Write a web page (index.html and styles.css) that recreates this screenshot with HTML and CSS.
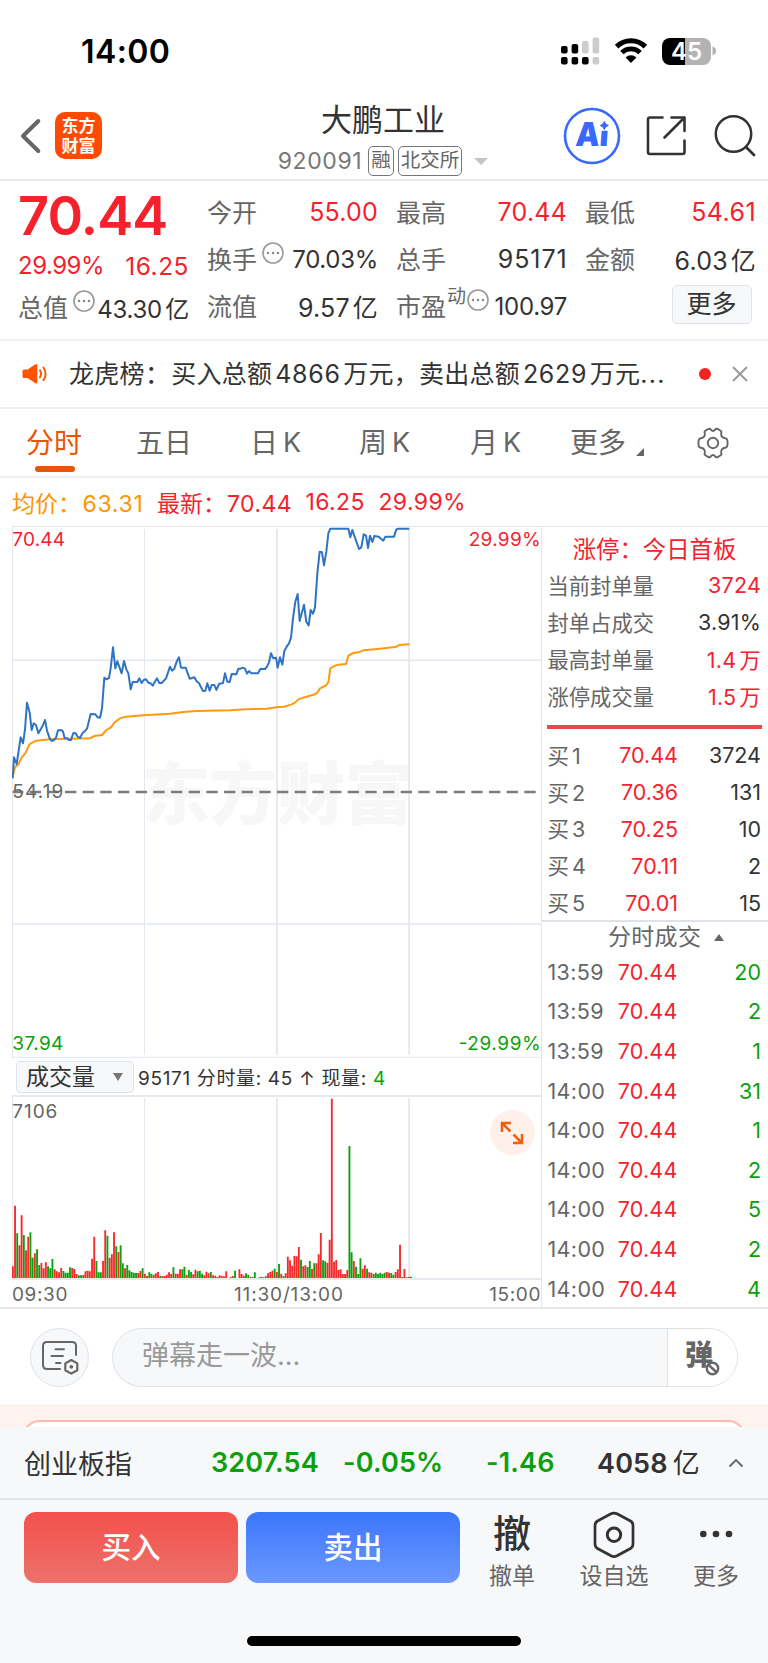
FILE: index.html
```html
<!DOCTYPE html>
<html lang="zh-CN">
<head>
<meta charset="utf-8">
<title>大鹏工业 920091</title>
<link rel="stylesheet" href="styles.css">
</head>
<body>
<div class="app">
  <div class="status">
    <span class="clock">14:00</span>
    <div class="status-icons">
      <svg class="signal" width="39" height="28" viewBox="0 0 39 28">
        <g fill="#000"><rect x="0" y="9" width="6.6" height="7.6" rx="2"/><rect x="10.6" y="7" width="6.6" height="9.6" rx="2"/><rect x="0" y="20" width="6.6" height="7.6" rx="2"/><rect x="10.6" y="20" width="6.6" height="7.6" rx="2"/><rect x="21" y="20" width="6.6" height="7.6" rx="2"/></g>
        <g fill="#ccc"><rect x="21" y="4" width="6.6" height="12.6" rx="2"/><rect x="31.6" y="0.5" width="6.6" height="16.1" rx="2"/><rect x="31.6" y="20" width="6.6" height="7.6" rx="2"/></g>
      </svg>
      <svg class="wifi" width="34" height="26" viewBox="0 0 34 26">
        <path d="M2.600 8.600a20.500 20.500 0 0 1 28.800 0" fill="none" stroke="#000" stroke-width="5"/>
        <path d="M7.900 14.600a13 13 0 0 1 18.200 0" fill="none" stroke="#000" stroke-width="4.800"/>
        <path d="M11.600 19.400a7.600 7.600 0 0 1 10.800 0L17 25z"/>
      </svg>
      <div class="battery"><span>45</span></div>
      <svg width="4" height="10" viewBox="0 0 4 10"><path d="M0.500 0.500a4.600 4.600 0 0 1 0 9z" fill="#b3b3b3"/></svg>
    </div>
  </div>

  <header class="header">
    <div class="header-left">
      <svg width="22" height="36" viewBox="0 0 22 36"><path d="M18.300 3L3 18l15.300 15" fill="none" stroke="#666" stroke-width="4" stroke-linecap="round" stroke-linejoin="round"/></svg>
      <div class="logo">东方<br>财富</div>
    </div>
    <div class="header-mid">
      <h1>大鹏工业</h1>
      <div class="code-line"><span class="code">920091</span><span class="tag">融</span><span class="tag">北交所</span><i class="caret-down"></i></div>
    </div>
    <div class="header-right">
      <svg width="58" height="58" viewBox="0 0 58 58">
        <circle cx="29" cy="29" r="27" fill="#fff" stroke="#3a68ff" stroke-width="2.600"/>
        <text class="ai-text" x="12" y="39.500" transform="translate(2.800 0) skewX(-4)" textLength="33" lengthAdjust="spacingAndGlyphs">Ai</text>
        <rect x="35.500" y="12" width="11.500" height="11.800" fill="#fff"/>
        <path d="M41.300 14.500Q42.200 17.600 45.300 18.500Q42.200 19.400 41.300 22.500Q40.400 19.400 37.300 18.500Q40.400 17.600 41.300 14.500z" fill="#3a68ff" stroke="#3a68ff"/>
      </svg>
      <svg class="share" width="42" height="42" viewBox="0 0 42 42"><path d="M16.500 2.500H4Q2 2.500 2 4.500V37Q2 39 4 39H36.500Q38.500 39 38.500 37V25.500M25.500 2.500H38.500V16M38.500 2.500L18.500 22.500" fill="none" stroke="#333" stroke-width="2.600" stroke-linecap="round" stroke-linejoin="round"/></svg>
      <svg class="search" width="42" height="42" viewBox="0 0 42 42"><circle cx="19.500" cy="19" r="17.700" fill="none" stroke="#333" stroke-width="2.500"/><path d="M32 32L40 40" stroke="#333" stroke-width="2.800" stroke-linecap="round"/></svg>
    </div>
  </header>

  <section class="quote">
    <div class="q-main">
      <div class="price">70.44</div>
      <div class="chg"><span>29.99%</span><span class="chg-abs">16.25</span></div>
      <div class="cell"><span class="lab">总值</span><svg class="dots" width="22" height="22" viewBox="0 0 22 22"><circle cx="11" cy="11" r="10"/><path d="M6 11h.01M11 11h.01M16 11h.01"/></svg><b class="tight">43.30<u>亿</u></b></div>
    </div>
    <div class="q-col">
      <div class="cell"><span class="lab">今开</span><b class="up">55.00</b></div>
      <div class="cell"><span class="lab">换手</span><svg class="dots" width="22" height="22" viewBox="0 0 22 22"><circle cx="11" cy="11" r="10"/><path d="M6 11h.01M11 11h.01M16 11h.01"/></svg><b class="tight">70.03%</b></div>
      <div class="cell"><span class="lab">流值</span><b>9.57<u>亿</u></b></div>
    </div>
    <div class="q-col">
      <div class="cell"><span class="lab">最高</span><b class="up">70.44</b></div>
      <div class="cell"><span class="lab">总手</span><b class="wide">95171</b></div>
      <div class="cell"><span class="lab">市盈</span><sup>动</sup><svg class="dots near" width="22" height="22" viewBox="0 0 22 22"><circle cx="11" cy="11" r="10"/><path d="M6 11h.01M11 11h.01M16 11h.01"/></svg><b class="tight">100.97</b></div>
    </div>
    <div class="q-col">
      <div class="cell"><span class="lab">最低</span><b class="up mid">54.61</b></div>
      <div class="cell"><span class="lab">金额</span><b>6.03<u>亿</u></b></div>
      <div class="more-btn">更多</div>
    </div>
  </section>

  <section class="news">
    <svg width="26" height="22" viewBox="0 0 26 22"><path d="M2 6.500h3.500L13 1.600Q15.300 .2 15.300 2.500V19Q15.300 21.600 13 20L5.500 15H2Q.500 15 .500 13.500V8Q.500 6.500 2 6.500z" fill="#ff5500"/><path d="M18 7.300q2 3.400 0 7M21.500 4.500q4.200 6.300 0 12.600" fill="none" stroke="#ff5500" stroke-width="1.900" stroke-linecap="round"/></svg>
    <p>龙虎榜：<span class="news-a">买入总额<i>4866</i>万元，卖出总额<i>2629</i>万元<em>...</em></span></p>
    <span class="red-dot"></span>
    <svg class="close" width="16" height="16" viewBox="0 0 16 16"><path d="M1 1l14 14M15 1L1 15" stroke="#999" stroke-width="1.900"/></svg>
  </section>

  <nav class="tabs">
    <span class="active">分时</span><span>五日</span><span>日<i>K</i></span><span>周<i>K</i></span><span>月<i>K</i></span><span>更多<i class="corner"></i></span>
    <svg width="32" height="32" viewBox="0 0 32 32" fill="none" stroke="#666" stroke-width="1.900" stroke-linejoin="round"><path d="M11 2.200Q13 1.100 13.800 2.700Q16 5.200 18.200 2.700Q19 1.100 21 2.200L23.300 3.500Q25 4.500 24.200 6.300Q23.700 10.700 28.200 11.200Q30.600 11.400 30.600 16Q30.600 20.600 28.200 20.800Q23.700 21.300 24.200 25.700Q25 27.500 23.300 28.500L21 29.800Q19 30.900 18.200 29.300Q16 26.800 13.800 29.300Q13 30.900 11 29.800L8.700 28.500Q7 27.500 7.800 25.700Q8.300 21.300 3.800 20.800Q1.400 20.600 1.400 16Q1.400 11.400 3.800 11.200Q8.300 10.700 7.800 6.300Q7 4.500 8.700 3.500z"/><circle cx="16" cy="16" r="5.200"/></svg>
  </nav>

  <div class="legend"><span class="avg">均价：<i>63.31</i></span><span>最新：<i class="l-now">70.44</i></span><i class="l-abs">16.25</i><i class="l-pct">29.99%</i></div>

  <section class="market">
    <div class="charts">
      <svg class="price-chart" width="530" height="532" viewBox="36 18 1590 1596">
        <text class="watermark" x="426" y="896" textLength="812">东方财富</text>
        <g stroke="#e3e7f0" stroke-width="4">
          <path d="M433.500 27V1604" stroke-width="3"/>
          <path d="M831 27V1604M1227.500 27V1604" stroke-width="5.500"/>
          <path d="M37 421H1625M37 1212H1625" stroke-width="4.500"/>
          <path d="M37.500 18V1613M1624.500 18V1613M36 1612H1626" stroke-width="3"/>
          <path d="M36 19.500H1626" stroke-width="3"/>
        </g>
        <path d="M38 816H1626" stroke="#7c7c7c" stroke-width="7.500" stroke-dasharray="34 19" stroke-dashoffset="2"/>
        <polyline class="line-avg" points="38,770 45,742 55,733 65,712 76,700 88,673 108,662 150,658 270,655 283,648 306,645 319,630 333,622 343,608 358,596 378,590 430,586 510,581 550,576 590,573 690,571 740,568 800,566 835,561 853,560 875,553 885,548 895,538 910,533 945,523 952,518 959,506 978,496 985,487 991,445 1003,438 1015,434 1038,432 1045,407 1060,399 1075,397 1090,391 1140,386 1190,380 1197,375 1228,373"/>
        <polyline class="line-price" points="38,775 42,712 50,732 62,652 69,670 75,628 81,548 89,578 95,630 101,610 108,615 115,640 123,626 129,615 135,600 141,632 149,655 155,663 162,660 168,653 174,631 186,631 189,635 194,654 202,655 207,660 213,660 220,639 227,640 233,650 240,654 247,640 254,634 261,626 272,582 286,583 293,592 300,593 306,565 313,473 319,478 327,474 332,445 339,382 346,445 352,424 365,460 372,423 379,448 385,460 392,508 398,486 412,486 418,475 425,489 431,480 438,478 445,488 452,490 458,497 471,475 478,489 485,489 498,475 510,440 516,452 523,446 530,425 537,412 543,443 557,443 569,476 583,472 590,484 597,490 609,513 616,512 622,490 629,512 635,495 643,495 649,510 657,492 669,489 675,460 682,485 689,486 695,462 709,463 715,446 722,446 728,443 735,446 741,461 747,453 754,460 774,460 781,447 795,447 801,440 807,427 813,400 820,415 828,413 833,443 840,412 847,434 853,393 860,380 867,370 873,353 879,295 886,245 893,222 899,303 912,254 919,306 926,316 932,270 939,281 945,263 952,160 959,95 966,97 972,136 979,95 985,40 991,26 1045,26 1051,52 1057,30 1071,70 1077,87 1084,82 1091,43 1098,47 1104,84 1110,47 1117,66 1123,48 1136,50 1150,62 1156,50 1182,50 1189,28 1194,26 1228,26"/>
        <g class="axis-text">
          <text x="37" y="77" fill="#f5222d" textLength="158">70.44</text>
          <text x="1406" y="77" fill="#f5222d" textLength="216">29.99%</text>
          <text x="37" y="834" fill="#666" textLength="153">54.19</text>
          <text x="37" y="1590" fill="#0da00d" textLength="153">37.94</text>
          <text x="1376" y="1590" fill="#0da00d" textLength="246">-29.99%</text>
        </g>
      </svg>
      <div class="vol-bar">
        <div class="vol-select"><span>成交量</span><i class="vol-caret"></i></div>
        <span class="vol-text">95171 分时量: 45 ↑ 现量: <em>4</em></span>
      </div>
      <div class="vol-wrap">
        <svg class="vol-chart" width="530" height="185" viewBox="36 195 1590 555">
          <g stroke="#e3e7f0" stroke-width="5.500"><path d="M433.500 205V744" stroke-width="3"/><path d="M831 205V744M1227.500 205V744"/><path d="M37.500 195V748M1624.500 195V750" stroke-width="3"/><path d="M36 198H1626M36 747H1626" stroke="#dfe2e9" stroke-width="5"/></g>
          <path id="bars-up" stroke="#f52a2a" stroke-width="5.600" fill="none"/>
          <path id="bars-down" stroke="#0da00d" stroke-width="5.600" fill="none"/>
          <g class="axis-text"><text x="37" y="264" fill="#666" textLength="135">7106</text></g>
        </svg>
        <div class="expand"><svg width="24" height="24" viewBox="0 0 24 24" fill="none" stroke="#f2600c" stroke-width="2.500"><path d="M2 11V2h9M2.500 2.500l8 8M22 13v9h-9M21.500 21.500l-8-8"/></svg></div>
      </div>
      <div class="times"><span>09:30</span><span class="t-mid">11:30/13:00</span><span>15:00</span></div>
    </div>

    <aside class="side">
      <h2>涨停：今日首板</h2>
      <div class="stats">
        <div><span>当前封单量</span><b class="up">3724</b></div>
        <div><span>封单占成交</span><b>3.91%</b></div>
        <div><span>最高封单量</span><b class="up">1.4<u>万</u></b></div>
        <div><span>涨停成交量</span><b class="up">1.5<u>万</u></b></div>
      </div>
      <div class="ratio"></div>
      <div class="bids">
        <div><span>买<i>1</i></span><b class="up">70.44</b><b>3724</b></div>
        <div><span>买<i>2</i></span><b class="up">70.36</b><b>131</b></div>
        <div><span>买<i>3</i></span><b class="up">70.25</b><b>10</b></div>
        <div><span>买<i>4</i></span><b class="up">70.11</b><b>2</b></div>
        <div><span>买<i>5</i></span><b class="up">70.01</b><b>15</b></div>
      </div>
      <h3>分时成交<i class="caret-up"></i></h3>
      <div class="trades">
        <div><span>13:59</span><b class="up">70.44</b><b class="down">20</b></div>
        <div><span>13:59</span><b class="up">70.44</b><b class="down">2</b></div>
        <div><span>13:59</span><b class="up">70.44</b><b class="down">1</b></div>
        <div><span>14:00</span><b class="up">70.44</b><b class="down">31</b></div>
        <div><span>14:00</span><b class="up">70.44</b><b class="down">1</b></div>
        <div><span>14:00</span><b class="up">70.44</b><b class="down">2</b></div>
        <div><span>14:00</span><b class="up">70.44</b><b class="down">5</b></div>
        <div><span>14:00</span><b class="up">70.44</b><b class="down">2</b></div>
        <div><span>14:00</span><b class="up">70.44</b><b class="down">4</b></div>
      </div>
    </aside>
  </section>

  <section class="danmu">
    <div class="danmu-set"><svg width="38" height="36" viewBox="0 0 38 36" fill="none" stroke="#666" stroke-width="2" stroke-linecap="round"><path d="M19 29H6Q2 29 2 25V6Q2 2 6 2H31Q35 2 35 6V15"/><path d="M14.500 9.300h8.500M10.500 16h11.500M15 23h4.500" stroke-width="1.900"/><path d="M30.300 20L36.300 23.400V30.200L30.300 33.600L24.300 30.200V23.400z" stroke-width="2.200" stroke-linejoin="round"/><circle cx="30.300" cy="26.800" r="1.900" fill="#666" stroke="none"/></svg></div>
    <div class="danmu-pill"><span class="danmu-input">弹幕走一波...</span><span class="danmu-off"><b>弹</b><svg width="15" height="15" viewBox="0 0 15 15"><circle cx="7.500" cy="7.500" r="5.700"/><path d="M3.700 4l7.600 7"/></svg></span></div>
  </section>

  <div class="promo"><div class="promo-card"></div></div>

  <div class="index-bar">
    <span class="ix-name">创业板指</span><b class="ix-a">3207.54</b><b class="ix-b">-0.05%</b><b class="ix-c">-1.46</b><b class="ix-d">4058<u>亿</u></b>
    <svg width="16" height="10" viewBox="0 0 16 10"><path d="M1.500 8.500L8 2l6.500 6.500" fill="none" stroke="#666" stroke-width="1.800"/></svg>
  </div>

  <footer class="actions">
    <div class="btn buy">买入</div>
    <div class="btn sell">卖出</div>
    <div class="act act-1"><span class="act-glyph">撤</span><span>撤单</span></div>
    <div class="act act-2"><svg width="44" height="48" viewBox="0 0 44 48" fill="none" stroke="#333" stroke-width="2.700" stroke-linejoin="round"><path d="M19 2.800Q22 1.300 25 2.800L38.500 10Q41 11.500 41 14.500V33Q41 36 38.500 37.500L25 44.800Q22 46.300 19 44.800L5.500 37.500Q3 36 3 33V14.500Q3 11.500 5.500 10z"/><circle cx="22" cy="23.800" r="6.700" stroke-width="3"/></svg><span>设自选</span></div>
    <div class="act act-3"><svg width="34" height="48" viewBox="0 0 34 48" fill="#333"><circle cx="4.300" cy="23" r="3.300"/><circle cx="17" cy="23" r="3.300"/><circle cx="30" cy="23" r="3.300"/></svg><span>更多</span></div>
  </footer>
  <div class="home"></div>
</div>
<script src="app.js"></script>
</body>
</html>
```
FILE: styles.css
```css
* { box-sizing: border-box; margin: 0; padding: 0; }
body { width: 768px; background: #fff; color: #333; font-family: Inter, "Noto Sans CJK SC", sans-serif; }
i, u, em { font-style: normal; text-decoration: none; }
b { font-weight: 400; }
svg { display: block; flex: none; }
.app { width: 768px; height: 1663px; overflow: hidden; display: flex; flex-direction: column; }
.app > * { flex: none; white-space: nowrap; }
.up { color: #f5222d; }
.down { color: #0da00d; }

.status { height: 92px; padding: 32px 52px 0 81px; display: flex; justify-content: space-between; }
.clock { font-size: 32px; line-height: 40px; font-weight: 600; color: #000; letter-spacing: 0.400px; }
.status-icons { display: flex; align-items: center; height: 38px; }
.wifi { margin: 0 14px 0 14px; }
.battery { width: 49px; height: 27px; border-radius: 8px; background: linear-gradient(90deg, #000 46.5%, #b3b3b3 46.5%); color: #fff; font-size: 24px; font-weight: 600; line-height: 27px; text-align: center; margin-right: 1px; }

.header { height: 89px; border-bottom: 2px solid #ececee; display: grid; grid-template-columns: 230px 306px 232px; }
.header-left { display: flex; align-items: center; padding: 1px 0 0 20px; gap: 13px; }
.logo { width: 47px; height: 47px; margin-top: -1px; border-radius: 10px; background: #ff4a00; color: #fff; font-weight: 700; font-size: 17px; line-height: 20px; padding-top: 3px; text-align: center; font-family: "Noto Sans CJK SC", sans-serif; }
.header-mid { display: flex; flex-direction: column; align-items: center; }
h1 { font-size: 31px; font-weight: 400; line-height: 40px; margin-top: 8px; }
.code-line { display: flex; align-items: center; height: 30px; margin-top: 6px; }
.code { font-size: 23px; color: #777; margin-right: 6px; letter-spacing: 0.600px; }
.tag { border: 1.500px solid #777; border-radius: 5px; color: #666; height: 30px; line-height: 27px; font-size: 19.500px; padding: 0 2px; margin-right: 4px; }
.caret-down { border: 7px solid transparent; border-top-color: #c4c4c4; border-bottom: 0; margin-left: 8px; }
.header-right { display: flex; align-items: center; padding: 1px 0 0 27px; }
.ai-text { font: 900 33px Inter, sans-serif; fill: #3a68ff; }
.share { margin-left: 25px; }
.search { margin-left: 26px; }

.quote { height: 158px; padding: 9px 12px 0 18px; display: grid; grid-template-columns: repeat(4, 170.500px); column-gap: 18.500px; }
.q-main { display: flex; flex-direction: column; }
.price { height: 52px; line-height: 52px; font-size: 54px; font-weight: 600; color: #f5222d; letter-spacing: -0.800px; }
.chg { height: 47px; display: flex; justify-content: space-between; align-items: center; font-size: 24px; color: #f5222d; letter-spacing: -0.500px; }
.chg-abs { letter-spacing: 0.500px; font-size: 24.500px; margin-right: -0.500px; }
.cell { height: 47px; display: flex; align-items: center; font-size: 25px; }
.q-main .cell { margin-top: -6px; }
.q-col { margin-top: -2px; }
.cell .lab { color: #666; font-size: 25px; margin-top: -1px; }
.cell b { margin: 0 -0.500px 0 auto; letter-spacing: 0.200px; }
.cell b.wide { letter-spacing: 0.900px; margin-right: -1px; }
.cell b.mid { letter-spacing: 0.400px; }
.dots { margin: -11px 0 0 5px; fill: none; stroke: #999; stroke-width: 1.600; }
.dots path { stroke-width: 2.500; stroke-linecap: round; stroke: #888; }
.dots.near { margin-left: 1px; }
.cell b.tight { font-size: 24px; letter-spacing: -0.300px; padding-top: 2px; }
.cell b.tight u { margin-left: 3.500px; }
sup { font-size: 19px; color: #666; margin: -17px 0 0 1px; line-height: 20px; vertical-align: baseline; }
.more-btn { width: 80px; height: 39px; margin: 3px 4px 0 auto; border: 1.500px solid #dfe2e8; border-radius: 5px; background: #f7f8fa; font-size: 25px; line-height: 37px; text-align: center; }

.news { height: 70px; border: solid #f1f1f3; border-width: 2px 0; display: flex; align-items: center; padding-left: 22px; }
.news p { width: 600px; margin: -4px 0 0 21px; font-size: 25px; letter-spacing: 0.300px; }
.news-a { margin-left: 1px; letter-spacing: 0.250px; }
.news-a i { margin: 0 2.500px 0 3px; letter-spacing: 0.700px; }
.news-a em { letter-spacing: 1.300px; }
.red-dot { width: 12px; height: 12px; border-radius: 50%; background: #f52222; margin-left: 30px; }
.close { margin-left: 21px; }

.tabs { height: 69px; border-bottom: 2px solid #f1f1f3; padding: 0 0 0 26px; display: grid; grid-template-columns: 110px 114px 109px 111px 100px 127px 40px; align-items: center; font-size: 28px; color: #666; }
.tabs span { display: flex; align-items: center; height: 66px; padding-bottom: 3px; }
.tabs span i:not(.corner) { margin-left: 5px; font-size: 27px; padding-top: 2px; }
.tabs .active { color: #ea5504; position: relative; }
.active::after { content: ""; position: absolute; left: 9px; bottom: 4px; width: 40px; height: 6px; border-radius: 3px; background: #ea5504; }
.corner { border: 4px solid #666; border-top-color: transparent; border-left-color: transparent; margin: 22px 0 0 10px; }

.legend { height: 48px; padding-left: 12px; display: flex; align-items: center; font-size: 23px; color: #f5222d; }
.legend i { letter-spacing: 0.400px; }
.avg { color: #ff9500; width: 145px; }
.avg i { margin-left: 1.500px; letter-spacing: 0.700px; }
.l-now { margin-left: 1px; }
.l-abs { margin-left: 13.500px; }
.l-pct { margin-left: 13.500px; }

.market { height: 783px; display: grid; grid-template-columns: 542px 226px; border-bottom: 2px solid #e6e8ec; }
.charts { padding-left: 12px; }
.axis-text { font: 57px Inter, sans-serif; }
.watermark { font: 900 204px "Noto Sans CJK SC", sans-serif; fill: #f7f7f8; }
.line-avg, .line-price { fill: none; stroke-width: 6; stroke-linejoin: round; stroke: #ff9a0f; }
.line-price { stroke: #2f74c3; }
.vol-bar { height: 37px; border-right: 1px solid #e3e7f0; display: flex; align-items: center; padding-left: 4px; }
.vol-select { width: 118px; height: 32px; border: 1.500px solid #dfe2e8; border-radius: 4px; background: #f7f8fa; display: flex; align-items: center; justify-content: space-between; padding: 0 10px 0 9px; font-size: 23px; line-height: 28px; }
.vol-caret { border: 5px solid transparent; border-top: 8px solid #777; border-bottom: 0; }
.vol-text { font-size: 19px; margin: -1px 0 0 4px; letter-spacing: 0.650px; }
.vol-text em { color: #0da00d; }
.vol-wrap { height: 185px; position: relative; }
.expand { position: absolute; right: 7px; top: 15px; width: 45px; height: 45px; border-radius: 50%; background: #fff1ea; display: grid; place-items: center; padding-right: 1px; }
.times { height: 28px; border-right: 1px solid #e3e7f0; display: grid; grid-template-columns: 222px 1fr auto; align-items: center; font-size: 19px; color: #666; letter-spacing: 0.600px; }
.t-mid { letter-spacing: 0.850px; }

.side { border-top: 1px solid #e3e7f0; }
.side h2 { font-size: 23.400px; font-weight: 400; color: #f5222d; text-align: center; height: 39px; line-height: 45px; padding-right: 1px; }
.stats div, .bids div, .trades div { display: grid; align-items: center; padding: 0 7px 0 5.500px; font-size: 21.500px; }
.stats div { grid-template-columns: 1fr auto; height: 37px; }
.side span { color: #666; }
.side b:last-child { text-align: right; }
.stats span { font-size: 21.300px; }
.stats b { letter-spacing: 0.200px; }
u { margin-left: 3px; }
.ratio { height: 4px; margin: 11px 6px 0 5px; background: #ef4648; }
.bids { padding-top: 8px; height: 191px; }
.bids div { height: 36.800px; grid-template-columns: 40px 90.500px 1fr; }
.bids span { margin-top: -2px; }
.bids i { margin-left: 3px; }
.bids b:nth-child(2), .trades b:nth-child(2) { text-align: right; }
.side h3 { font-size: 23px; font-weight: 400; color: #666; border-top: 2px solid #dfe2e8; height: 32px; line-height: 31px; display: flex; align-items: center; padding-left: 66px; letter-spacing: 0.300px; }
.caret-up { border: 5px solid transparent; border-bottom: 7px solid #666; border-top: 0; margin-left: 13px; }
.trades div { height: 39.600px; grid-template-columns: 60px 70px 1fr; }
.trades span { letter-spacing: 0.350px; }
.trades b:nth-child(2) { letter-spacing: 0.200px; }

.danmu { height: 96px; padding: 19px 30px 0 30px; display: flex; }
.danmu-set { width: 59px; height: 59px; border: 1.500px solid #dfe1e8; border-radius: 50%; background: #f7f8fa; display: grid; place-items: center; padding-top: 1px; }
.danmu-pill { width: 626px; height: 59px; margin-left: 23px; border: 1.500px solid #dfe1e8; border-radius: 30px; background: #f7f8fa; display: flex; overflow: hidden; }
.danmu-input { flex: 1; padding-left: 29px; font-size: 27px; line-height: 53px; color: #999; }
.danmu-off { width: 70px; border-left: 1.500px solid #dfe1e8; background: #fff; color: #666; display: flex; padding-left: 17px; }
.danmu-off b { font-size: 28px; font-weight: 900; line-height: 53px; }
.danmu-off svg { margin: 32px 0 0 -8px; }
.danmu-off circle { fill: #fff; stroke: #666; stroke-width: 2.400; }
.danmu-off path { stroke: #666; stroke-width: 2.400; }

.promo { height: 22px; border-top: 1px solid #f3ecec; background: #fff3ef; padding: 14px 22px 0; overflow: hidden; }
.promo-card { height: 40px; border: 2px solid #ffb9ad; border-radius: 18px; background: #fff; }

.index-bar { height: 73px; border-bottom: 2px solid #e3e5ea; background: #f7f8fa; display: flex; align-items: center; padding: 0 24px 0 24px; font-size: 27px; }
.index-bar b { font-weight: 600; color: #0da00d; letter-spacing: 0.150px; }
.index-bar u { font-weight: 400; margin-left: 5px; }
.ix-name { width: 187px; }
.ix-a { width: 132px; }
.ix-b { width: 143px; }
.ix-c { width: 111px; }
.index-bar .ix-d { color: #333; width: 131px; padding-bottom: 2px; }

.actions { height: 136px; background: #f7f8fa; padding: 11px 0 0 24px; display: flex; }
.btn { width: 214px; height: 71px; margin-top: 1px; border-radius: 12px; color: #fff; font-size: 29.500px; font-weight: 500; line-height: 70px; text-align: center; }
.buy { background: linear-gradient(#f4504b, #ec726c); }
.sell { margin-left: 8px; background: linear-gradient(#3b76fb, #6c98ff); }
.act { display: flex; flex-direction: column; align-items: center; color: #666; font-size: 23px; line-height: 34px; }
.act > :first-child { height: 48px; }
.act-glyph { font-size: 38px; line-height: 44px; font-weight: 500; color: #333; }
.act-1 { width: 102px; margin-left: 1px; }
.act-2 { width: 102px; }
.act-3 { width: 102px; }
.home { flex: 1 !important; background: #f7f8fa; }
.home::before { content: ""; display: block; width: 274px; height: 10px; border-radius: 5px; background: #000; margin: 0 auto; }
```
FILE: app.js
```js
// Per-minute volume: direction (r up / g down) followed by bar height.
const volume = ("r35 r217 g134 r98 r188 g129 r83 r124 g137 g61 r74 g86 g39 r45 r29 r47 g35 g29 g57 r26 r20 r17 r30 g21 g16 g16 g32 r30 r27 r12 " +
  "g8 g8 r9 r20 r22 r20 r58 r124 g51 g17 g17 r51 r143 g127 r61 r71 r137 g95 r78 g98 g44 r29 g39 g23 g18 g16 g15 r15 r21 g29 " +
  "r13 r6 g17 g13 r10 r14 r18 g6 r6 r6 r10 r17 r12 g32 r13 r13 r26 g26 g34 r10 g24 g18 r11 r25 g20 g22 g13 r8 r19 r14 " +
  "g18 r8 r7 r3 r8 r6 r5 r20 r0 r3 r6 g22 r0 r26 r12 r7 g14 g10 r4 r3 g17 r0 r2 r4 r2 r5 r14 r18 r22 g28 " +
  "r18 g42 r13 g6 r14 r64 r53 r37 r66 r65 r93 g55 r35 r38 g33 g51 r27 g44 r44 r71 r135 g53 g50 r46 r115 r538 r49 r54 r24 r26 " +
  "r12 r12 r24 g396 g77 r51 g34 g12 g59 r28 r38 g28 r17 r16 g12 g16 g12 g16 g12 g16 r18 r16 g15 g10 r18 r26 r100 r3 r27 r2 r4 r4").split(" ");

const paths = { r: "", g: "" };
volume.forEach((bar, i) => {
  const height = Number(bar.slice(1));
  if (height) paths[bar[0]] += `M${(38.5 + i * 6.6).toFixed(1)} 744v-${height}`;
});
document.getElementById("bars-up").setAttribute("d", paths.r);
document.getElementById("bars-down").setAttribute("d", paths.g);
```
